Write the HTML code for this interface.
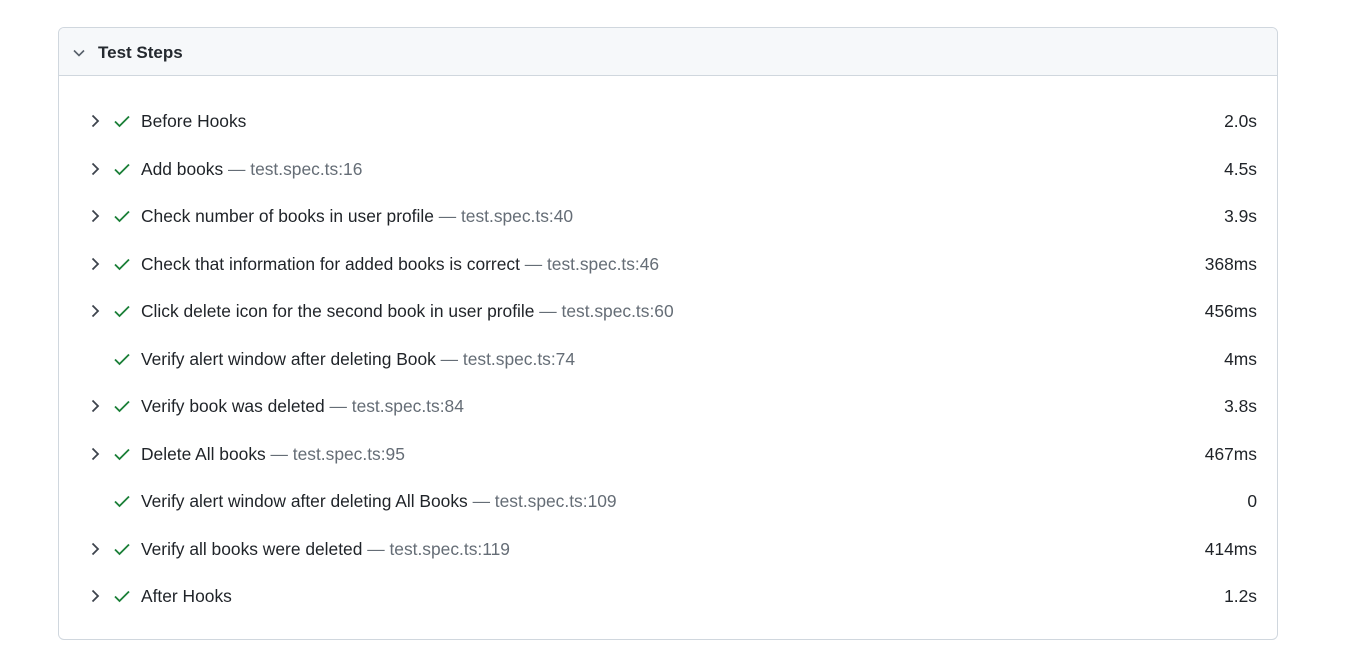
<!DOCTYPE html>
<html><head><style>
body{margin:0;background:#fff;font-family:"Liberation Sans",sans-serif;color:#1f2328;}
.box{position:absolute;left:58px;top:27px;width:1218px;height:611px;border:1px solid #d0d7de;border-radius:6px;overflow:hidden;}
.hdr{height:47px;background:#f6f8fa;border-bottom:1px solid #d0d7de;position:relative;}
.hdr span{position:absolute;left:39px;top:15px;font-size:17px;font-weight:bold;color:#24292f;}
.hdr svg{position:absolute;left:13px;top:18px;}
.row{position:absolute;left:0;width:1218px;height:24px;font-size:17.4px;}
.row .c{position:absolute;left:30px;top:5px;}
.row .k{position:absolute;left:54px;top:5px;}
.row .t{position:absolute;left:82px;top:2px;white-space:nowrap;}
.row .m{color:#656d76;}
.row .d{position:absolute;right:20px;top:2px;}
</style></head><body>
<div class="box">
<div class="hdr"><svg width="14" height="14" viewBox="0 0 14 14"><path d="M2 4.5L7 9.5L12 4.5" fill="none" stroke="#57606a" stroke-width="1.6"/></svg><span>Test Steps</span></div>
</div>
<div id="rows"></div>
<script>
const R=[["Before Hooks","","2.0s",1],["Add books","test.spec.ts:16","4.5s",1],["Check number of books in user profile","test.spec.ts:40","3.9s",1],["Check that information for added books is correct","test.spec.ts:46","368ms",1],["Click delete icon for the second book in user profile","test.spec.ts:60","456ms",1],["Verify alert window after deleting Book","test.spec.ts:74","4ms",0],["Verify book was deleted","test.spec.ts:84","3.8s",1],["Delete All books","test.spec.ts:95","467ms",1],["Verify alert window after deleting All Books","test.spec.ts:109","0",0],["Verify all books were deleted","test.spec.ts:119","414ms",1],["After Hooks","","1.2s",1]];
let h="";R.forEach((r,i)=>{const y=109+i*47.5;
h+=`<div class="row" style="top:${y}px;left:59px">`+(r[3]?`<svg class="c" width="12" height="14" viewBox="0 0 12 14"><path d="M3.5 1.5L9 7L3.5 12.5" fill="none" stroke="#3d444d" stroke-width="1.8"/></svg>`:"")+
`<svg class="k" width="18" height="14" viewBox="0 0 18 14"><path d="M2 7.5L6.5 12L16 2.5" fill="none" stroke="#1a7f37" stroke-width="1.8"/></svg><span class="t">${r[0]}${r[1]?` <span class="m">— ${r[1]}</span>`:""}</span><span class="d">${r[2]}</span></div>`});
document.getElementById("rows").innerHTML=h;
</script>
</body></html>
